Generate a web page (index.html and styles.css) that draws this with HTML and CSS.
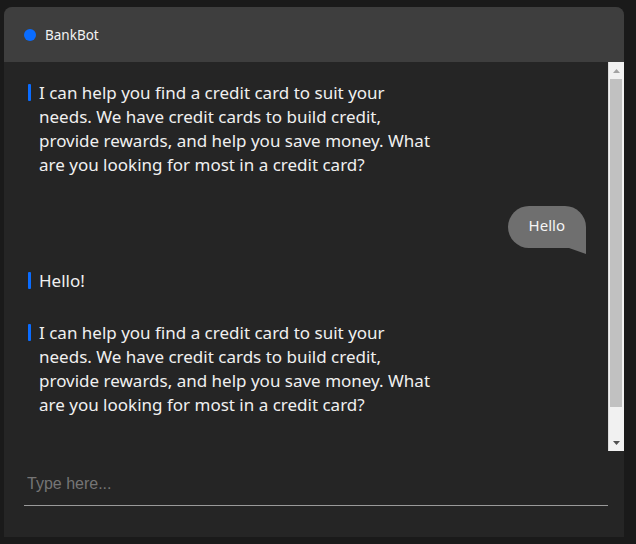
FILE: index.html
```html
<!DOCTYPE html>
<html>
<head>
<meta charset="utf-8">
<link rel="stylesheet" href="styles.css">
</head>
<body>
<div class="chat">
  <div class="chat-header">
    <span class="status-dot"></span>
    <span class="bot-name">BankBot</span>
  </div>
  <div class="body-row">
    <div class="messages">
      <div class="msg bot">
        <span class="bar"></span>
        <p class="text">I can help you find a credit card to suit your needs. We have credit cards to build credit, provide rewards, and help you save money. What are you looking for most in a credit card?</p>
      </div>
      <div class="msg user">
        <div class="bubble">Hello</div>
      </div>
      <div class="msg bot short">
        <span class="bar"></span>
        <p class="text">Hello!</p>
      </div>
      <div class="msg bot last">
        <span class="bar"></span>
        <p class="text">I can help you find a credit card to suit your needs. We have credit cards to build credit, provide rewards, and help you save money. What are you looking for most in a credit card?</p>
      </div>
    </div>
    <div class="scrollbar">
      <div class="sb-btn">
        <svg width="7" height="4" viewBox="0 0 7 4"><polygon points="0,4 7,4 3.5,0" fill="#a3a3a3"/></svg>
      </div>
      <div class="sb-track"><div class="sb-thumb"></div></div>
      <div class="sb-btn">
        <svg width="7" height="4" viewBox="0 0 7 4"><polygon points="0,0 7,0 3.5,4" fill="#505050"/></svg>
      </div>
    </div>
  </div>
  <div class="composer">
    <input class="input" type="text" placeholder="Type here...">
  </div>
</div>
</body>
</html>
```
FILE: styles.css
```css
* { box-sizing: border-box; }
html, body { margin: 0; padding: 0; }
body {
  background: #1a1a1a;
  padding: 7px 12px 7px 4px;
  font-family: "Noto Sans", sans-serif;
}
.chat {
  width: 620px;
  height: 530px;
  background: #252525;
  border-radius: 8px 8px 0 0;
  display: flex;
  flex-direction: column;
  overflow: hidden;
}
.chat-header {
  height: 55px;
  flex: none;
  background: #3e3e3e;
  display: flex;
  align-items: center;
  padding-left: 20px;
  gap: 9px;
}
.status-dot {
  width: 12px;
  height: 12px;
  border-radius: 50%;
  background: #0a6cff;
}
.bot-name {
  color: #f2f2f2;
  font-size: 13.5px;
}
.body-row {
  height: 389px;
  flex: none;
  display: flex;
}
.messages {
  flex: 1;
  overflow: hidden;
  padding: 19px 22px 0 24px;
  display: flex;
  flex-direction: column;
}
.msg { display: flex; flex: none; }
.msg.bot { align-items: flex-start; }
.bar {
  width: 3px;
  height: 17px;
  margin-top: 3px;
  background: #0a6cff;
  flex: none;
  border-radius: 1px;
}
.text {
  margin: 0 0 0 8px;
  color: #f0f0f0;
  font-size: 17px;
  line-height: 24px;
  max-width: 400px;
}
.msg.user {
  justify-content: flex-end;
  margin-top: 29px;
}
.bubble {
  position: relative;
  background: #6f6f6f;
  color: #f5f5f5;
  font-size: 15px;
  line-height: 18px;
  padding: 10px 21px 14px;
  border-radius: 21px 21px 0 21px;
}
.bubble::after {
  content: "";
  position: absolute;
  right: 0;
  bottom: -6px;
  width: 0;
  height: 0;
  border-top: 6px solid #6f6f6f;
  border-left: 17px solid transparent;
}
.msg.short { margin-top: 21px; }
.msg.last { margin-top: 28px; }
.scrollbar {
  width: 16px;
  flex: none;
  background: #f1f1f1;
  display: flex;
  flex-direction: column;
  box-shadow: inset 1px 0 0 #dcdcdc;
}
.sb-btn {
  height: 17px;
  flex: none;
  display: flex;
  align-items: center;
  justify-content: center;
  padding-left: 1px;
}
.sb-btn svg { display: block; }
.sb-track {
  flex: 1;
  padding: 0 2px;
}
.sb-thumb {
  height: 328px;
  background: #c1c1c1;
}
.composer {
  flex: 1;
  padding: 20px 16px 0 20px;
}
.input {
  width: 584px;
  display: block;
  background: transparent;
  border: 0;
  border-bottom: 1px solid #9a9a9a;
  outline: none;
  color: #ddd;
  font-family: "Liberation Sans", Arial, sans-serif;
  font-size: 16px;
  padding: 4px 3px 12px;
  height: 35px;
}
.input::placeholder { color: #757575; }
```
